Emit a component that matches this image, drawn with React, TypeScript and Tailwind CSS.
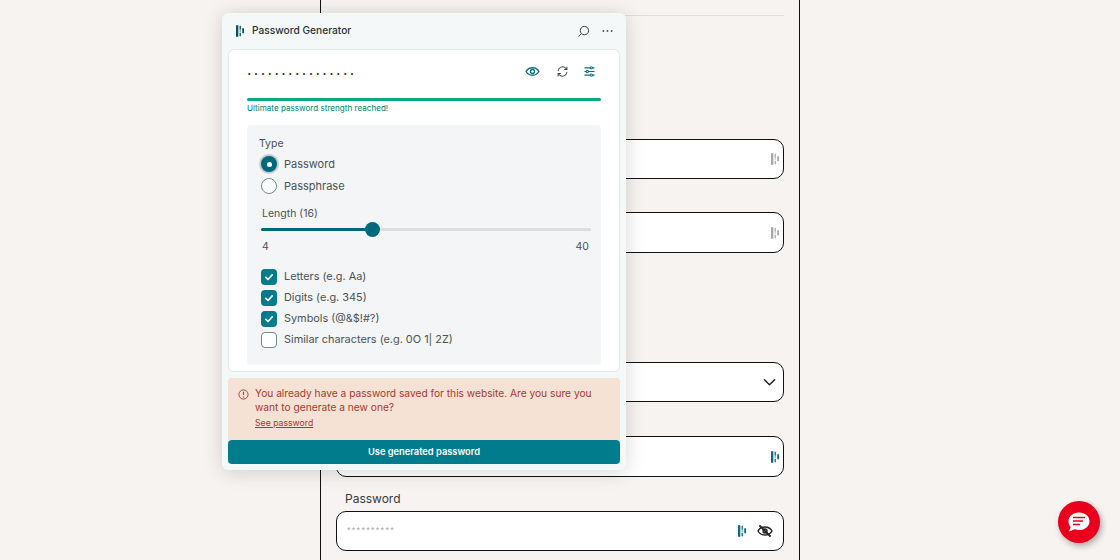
import React from "react";

const Logo = ({ color, className }: { color: string; className?: string }) => (
  <svg viewBox="0 0 9 13" className={className} fill={color}>
    <path d="M0 0h2.600v13H0z" />
    <path d="M4 0.500h1.500v4.500H4zM4 6h1.500v1H4zM4 8.500h1.500v4H4z" />
    <path d="M7 3.500h2v5.500H7z" />
  </svg>
);

const Field = ({ className, children }: { className?: string; children?: React.ReactNode }) => (
  <div className={`w-full rounded-[10px] border border-[#111] bg-white flex items-center justify-end pr-[4px] ${className ?? ""}`}>
    {children}
  </div>
);

const Check = ({ on, label }: { on: boolean; label: string }) => (
  <div className="flex items-center h-[21px] gap-[7px] ml-[2px]">
    {on ? (
      <span className="w-[16px] h-[16px] rounded-[4px] bg-[#007c8c] flex items-center justify-center">
        <svg viewBox="0 0 12 12" className="w-[10px] h-[10px]" fill="none" stroke="#fff" strokeWidth="2" strokeLinecap="round" strokeLinejoin="round">
          <path d="M2.200 6.400 4.800 9 9.800 3.400" />
        </svg>
      </span>
    ) : (
      <span className="w-[16px] h-[16px] rounded-[4px] bg-white border border-[#6f8a93]" />
    )}
    <span className="text-[10.9px] text-[#4a5256]">{label}</span>
  </div>
);

export default function App() {
  return (
    <div className="relative w-[1120px] h-[560px] overflow-hidden bg-[#f6f3f0] font-['Inter',sans-serif]">
      <div className="w-[480px] h-[560px] ml-[320px] border-x border-[#111] px-[15px]">
        <div className="h-[16px] border-b border-[#e0dcd8]" />
        <Field className="mt-[123px] h-[40px]"><Logo color="#a8a8a8" className="w-[8px] h-[12px]" /></Field>
        <Field className="mt-[33px] h-[41px]"><Logo color="#a8a8a8" className="w-[8px] h-[12px]" /></Field>
        <Field className="mt-[109px] h-[40px]">
          <svg viewBox="0 0 14 9" className="w-[13px] h-[9px] mr-[3px]" fill="none" stroke="#222" strokeWidth="1.6" strokeLinecap="round" strokeLinejoin="round">
            <path d="M1.500 1.500 7 7l5.500-5.500" />
          </svg>
        </Field>
        <Field className="mt-[34px] h-[41px]"><Logo color="#0e6a80" className="w-[8px] h-[12px]" /></Field>
        <div className="text-[12px] leading-[15px] text-[#3a3a3a] ml-[9px] mt-[14px] mb-[5px]">Password</div>
        <Field className="h-[40px] justify-between pl-[10px] pr-[10px]">
          <span className="text-[9px] tracking-[1.3px] text-[#a8a8a8] mr-auto font-['Liberation_Sans',sans-serif]">**********</span>
          <Logo color="#0e6a80" className="w-[8px] h-[12px] mr-[11px]" />
          <svg viewBox="0 0 16 12" className="w-[16px] h-[12px]" fill="none" stroke="#222" strokeWidth="1.4" strokeLinecap="round">
            <path d="M1 6c3-5.400 11-5.400 14 0-3 5.400-11 5.400-14 0Z" />
            <circle cx="8" cy="6" r="2" />
            <path d="M3 1l10 10" strokeWidth="1.800" />
          </svg>
        </Field>
      </div>

      <div className="absolute left-[222px] top-[13px] w-[404px] h-[457px] rounded-[6px] bg-[#f4f8f9] shadow-[0_2px_20px_rgba(0,0,0,0.16)] px-[6px] flex flex-col">
        <div className="h-[36px] flex items-center pl-[8px] pr-[6px] shrink-0">
          <Logo color="#0e4f60" className="w-[8px] h-[12px] mr-[8px]" />
          <span className="text-[10.2px] font-medium text-[#2a3236]">Password Generator</span>
          <svg viewBox="0 0 14 14" className="w-[13px] h-[13px] ml-auto mr-[12px]" fill="none" stroke="#2a3236" strokeWidth="1">
            <circle cx="8" cy="6" r="4.500" />
            <path d="M4.600 9.400 1.500 12.500" />
          </svg>
          <svg viewBox="0 0 12 4" className="w-[11px] h-[4px] mr-[1px]" fill="#4a5256">
            <circle cx="1.500" cy="2" r="1" />
            <circle cx="6" cy="2" r="1" />
            <circle cx="10.500" cy="2" r="1" />
          </svg>
        </div>

        <div className="h-[323px] shrink-0 rounded-[6px] bg-white border border-[#e4e9ea] px-[18px]">
          <div className="h-[43px] flex items-center">
            <span className="text-[7px] tracking-[4.4px] ml-[1px] mt-[4px] text-[#222] font-['Liberation_Sans',sans-serif] leading-none">••••••••••••••••</span>
            <svg viewBox="0 0 16 12" className="w-[15px] h-[11px] ml-auto" fill="none" stroke="#0e6f82" strokeWidth="1.500">
              <path d="M1 6c3-5.400 11-5.400 14 0-3 5.400-11 5.400-14 0Z" />
              <circle cx="8" cy="6" r="2.200" />
            </svg>
            <svg viewBox="0 0 12 12" className="w-[11px] h-[11px] ml-[17px]" fill="none" stroke="#3e474b" strokeWidth="1.100" strokeLinecap="round">
              <path d="M1.200 5.200A4.900 4.900 0 0 1 9.600 2.500L10.600 3.600M10.800 6.800A4.900 4.900 0 0 1 2.400 9.500L1.400 8.400" />
              <path d="M10.800 1.200v2.600H8.200M1.200 10.800V8.200h2.600" />
            </svg>
            <svg viewBox="0 0 12 12" className="w-[11px] h-[11px] ml-[16px] mr-[6px]" fill="none" stroke="#0e6f82" strokeWidth="1.200">
              <path d="M0.500 2h11M0.500 6h11M0.500 10h11" />
              <circle cx="8" cy="2" r="1.200" fill="#fff" />
              <circle cx="3.600" cy="6" r="1.200" fill="#fff" />
              <circle cx="8" cy="10" r="1.200" fill="#fff" />
            </svg>
          </div>
          <div className="h-[3px] mt-[5px] rounded-full bg-[#0ba885]" />
          <div className="text-[8.1px] leading-[12px] mt-[1px] text-[#00836b]">Ultimate password strength reached!</div>

          <div className="mt-[11px] h-[240px] rounded-[4px] bg-[#f4f5f7] px-[12px] pt-[12px]">
            <div className="text-[10.5px] leading-[14px] text-[#4a5256]">Type</div>
            <div className="flex items-center h-[22px] gap-[7px] mt-[2px] ml-[2px]">
              <span className="w-[16px] h-[16px] rounded-full bg-[#00687a] ring-2 ring-[#c3ccd0] flex items-center justify-center">
                <span className="w-[5px] h-[5px] rounded-full bg-white" />
              </span>
              <span className="text-[11px] text-[#4a5256]">Password</span>
            </div>
            <div className="flex items-center h-[22px] gap-[7px] ml-[2px]">
              <span className="w-[16px] h-[16px] rounded-full bg-white border border-[#6f8a93]" />
              <span className="text-[11px] text-[#4a5256]">Passphrase</span>
            </div>
            <div className="text-[10.5px] leading-[14px] text-[#4a5256] mt-[10px] ml-[3px]">Length (16)</div>
            <div className="relative h-[3px] mt-[7px] ml-[2px] w-[330px] rounded-full bg-[#d8e0df]">
              <div className="h-[3px] w-[111px] rounded-full bg-[#00687a]" />
              <span className="absolute left-[104px] top-[-6px] w-[15px] h-[15px] rounded-full bg-[#00687a]" />
            </div>
            <div className="flex justify-between text-[10.5px] leading-[14px] text-[#4a5256] mt-[9px] ml-[3px] w-[327px]">
              <span>4</span>
              <span>40</span>
            </div>
            <div className="mt-[12px]">
              <Check on label="Letters (e.g. Aa)" />
              <Check on label="Digits (e.g. 345)" />
              <Check on label="Symbols (@&$!#?)" />
              <Check on={false} label="Similar characters (e.g. 0O 1| 2Z)" />
            </div>
          </div>
        </div>

        <div className="mt-[6px] h-[62px] shrink-0 rounded-t-[4px] bg-[#f6e1d5] flex pl-[10px] pt-[8px]">
          <svg viewBox="0 0 12 12" className="w-[11px] h-[11px] mt-[3px] shrink-0" fill="none" stroke="#a83a2c" strokeWidth="1">
            <circle cx="6" cy="6" r="5" />
            <path d="M6 3v3.600M6 8.200v1" strokeWidth="1.200" />
          </svg>
          <div className="ml-[6px] text-[#a83a2c]">
            <div className="text-[10.2px] leading-[14px] w-[350px]">You already have a password saved for this website. Are you sure you want to generate a new one?</div>
            <div className="text-[8.7px] leading-[12px] mt-[3px] underline">See password</div>
          </div>
        </div>
        <div className="h-[24px] shrink-0 rounded-[4px] bg-[#007c8c] flex items-center justify-center text-[9.3px] font-semibold text-white">
          Use generated password
        </div>
      </div>

      <div className="absolute left-[1058px] top-[501px] w-[42px] h-[42px] rounded-full bg-[#e8001c] shadow-[2px_3px_6px_rgba(0,0,0,0.3)] flex items-center justify-center">
        <svg viewBox="0 0 24 22" className="w-[24px] h-[22px]">
          <path d="M12 1.500c6 0 10.500 3.700 10.500 8.700S18 19 12 19c-1.500 0-3-.25-4.200-.7L2 20.500l1.700-4.400C2.300 14.500 1.500 12.500 1.500 10.200 1.500 5.200 6 1.500 12 1.500Z" fill="#fff" />
          <path d="M6 6.500h12M6 10h10M6 13.500h7" stroke="#e8001c" strokeWidth="1.600" fill="none" />
        </svg>
      </div>
    </div>
  );
}
